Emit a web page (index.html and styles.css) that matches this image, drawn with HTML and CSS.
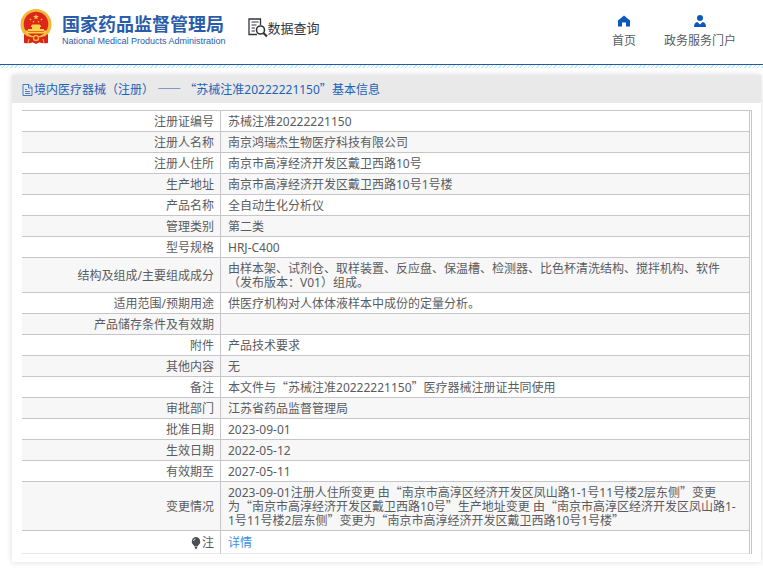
FILE: index.html
```
<!DOCTYPE html>
<html lang="zh-CN">
<head>
    <meta charset="UTF-8">
    <meta name="viewport" content="width=device-width, initial-scale=1.0">
    <title>国家药品监督管理局 数据查询</title>
    <link rel="stylesheet" href="styles.css">
</head>
<body>

    <header class="header">
        <a href="#" class="brand">
            <svg class="emblem" viewBox="0 0 32 35" aria-hidden="true">
                <path d="M5 24 L4 33 Q9 35 12 33 L16 35 L20 33 Q23 35 28 33 L27 24 Z" fill="#d8241c"/>
                <circle cx="16" cy="15.500" r="15.500" fill="#f0b838"/>
                <circle cx="16" cy="15" r="12.300" fill="#df2419"/>
                <path d="M16 5 L16.700 7.100 H18.900 L17.100 8.400 L17.800 10.500 L16 9.200 L14.200 10.500 L14.900 8.400 L13.100 7.100 H15.300 Z" fill="#f8d348"/>
                <g fill="#f8d348">
                    <circle cx="10.500" cy="10.500" r="0.800"/>
                    <circle cx="21.500" cy="10.500" r="0.800"/>
                    <circle cx="13.500" cy="12.800" r="0.800"/>
                    <circle cx="18.500" cy="12.800" r="0.800"/>
                    <path d="M11 17 L12.500 15.500 H19.500 L21 17 V18 H20 V20 H24 V21.500 H27 L25 24.500 H7 L5 21.500 H8 V20 H12 V18 H11 Z"/>
                </g>
                <path d="M8 22.500 H24" stroke="#df2419" stroke-width="0.600"/>
                <path d="M4 25 Q8 29 13 28 L16 26.500 L19 28 Q24 29 28 25 L28 34 Q22 35 19 33 L16 34 L13 33 Q10 35 4 34 Z" fill="#d8241c"/>
                <path d="M9 30 L8 34 M23 30 L24 34" fill="none" stroke="#f0b838" stroke-width="1"/>
                <circle cx="16" cy="29" r="2.500" fill="#d8241c" stroke="#f0b838" stroke-width="1.500"/>
            </svg>
            <span class="brand-text">
                <strong class="brand-name">国家药品监督管理局</strong>
                <span class="brand-en">National Medical Products Administration</span>
            </span>
        </a>

        <a href="#" class="search-link">
            <svg class="search-icon" viewBox="0 0 20 20" fill="none" stroke="#33343c" aria-hidden="true">
                <path d="M12.500 7 V1 H1 V16.500 H9" stroke-width="1.300"/>
                <path d="M3.500 4 H10.500 M3.500 7 H8.500 M3.500 10 H7 M3.500 13 H7" stroke-width="1"/>
                <circle cx="12.500" cy="12" r="4" stroke-width="1.600"/>
                <path d="M15.500 15 L19 18.500" stroke-width="2.200"/>
            </svg>
            <span>数据查询</span>
        </a>

        <nav class="nav">
            <a href="#">
                <svg class="nav-icon" viewBox="0 0 12 12" aria-hidden="true">
                    <path d="M6 0.500 L12 5.500 V11.500 H8 V7.500 H4 V11.500 H0 V5.500 Z" fill="#0b59bd"/>
                </svg>
                <span>首页</span>
            </a>
            <a href="#">
                <svg class="nav-icon" viewBox="0 0 12 12" aria-hidden="true">
                    <circle cx="6" cy="3" r="3" fill="#0b59bd"/>
                    <path d="M0 12 Q0 7.500 3.500 7 L6 9.500 L8.500 7 Q12 7.500 12 12 Z" fill="#0b59bd"/>
                </svg>
                <span>政务服务门户</span>
            </a>
        </nav>
    </header>

    <main class="card">
        <h1 class="card-title">
            <svg class="doc-icon" viewBox="0 0 11 12" fill="none" stroke="#1c62b9" aria-hidden="true">
                <path d="M1 0.500 H7 L10 3.500 V11.500 H1 Z M6.500 0.500 V4 H10 M3 5.500 H5 M3 7.500 H8 M3 9.500 H8" stroke-width="0.800"/>
            </svg>
            <span>境内医疗器械<span class="cn">（</span>注册<span class="cn">）</span> <span class="cn">——</span> <span class="cn">“</span>苏械注准20222221150<span class="cn">”</span>基本信息</span>
        </h1>

        <div class="card-body">
            <table class="info">
                <tbody>
                    <tr><th scope="row">注册证编号</th><td>苏械注准20222221150</td></tr>
                    <tr><th scope="row">注册人名称</th><td>南京鸿瑞杰生物医疗科技有限公司</td></tr>
                    <tr><th scope="row">注册人住所</th><td>南京市高淳经济开发区戴卫西路10号</td></tr>
                    <tr><th scope="row">生产地址</th><td>南京市高淳经济开发区戴卫西路10号1号楼</td></tr>
                    <tr><th scope="row">产品名称</th><td>全自动生化分析仪</td></tr>
                    <tr><th scope="row">管理类别</th><td>第二类</td></tr>
                    <tr><th scope="row">型号规格</th><td>HRJ-C400</td></tr>
                    <tr><th scope="row">结构及组成/主要组成成分</th><td>由样本架、试剂仓、取样装置、反应盘、保温槽、检测器、比色杯清洗结构、搅拌机构、软件（发布版本：V01）组成。</td></tr>
                    <tr><th scope="row">适用范围/预期用途</th><td>供医疗机构对人体体液样本中成份的定量分析。</td></tr>
                    <tr><th scope="row">产品储存条件及有效期</th><td></td></tr>
                    <tr><th scope="row">附件</th><td>产品技术要求</td></tr>
                    <tr><th scope="row">其他内容</th><td>无</td></tr>
                    <tr><th scope="row">备注</th><td>本文件与<span class="cn">“</span>苏械注准20222221150<span class="cn">”</span>医疗器械注册证共同使用</td></tr>
                    <tr><th scope="row">审批部门</th><td>江苏省药品监督管理局</td></tr>
                    <tr><th scope="row">批准日期</th><td>2023-09-01</td></tr>
                    <tr><th scope="row">生效日期</th><td>2022-05-12</td></tr>
                    <tr><th scope="row">有效期至</th><td>2027-05-11</td></tr>
                    <tr><th scope="row">变更情况</th><td>2023-09-01注册人住所变更 由<span class="cn">“</span>南京市高淳区经济开发区凤山路1-1号11号楼2层东侧<span class="cn">”</span>变更<span class="keep">为<span class="cn">“</span>南京市</span>高淳经济开发区戴卫西路10号<span class="cn">”</span>生产地址变更 由<span class="cn">“</span>南京市高淳区经济开发区凤山路1-<wbr><span class="keep">1号</span>11号楼2层东侧<span class="cn">”</span>变更为<span class="cn">“</span>南京市高淳经济开发区戴卫西路10号1号楼<span class="cn">”</span></td></tr>
                    <tr class="note">
                        <th scope="row">
                            <svg class="bulb-icon" viewBox="0 0 10 12" aria-hidden="true">
                                <path d="M5 0 A4.500 4.500 0 0 1 7.500 8 L6.500 9.500 H3.500 L2.500 8 A4.500 4.500 0 0 1 5 0 Z M3.500 10 H6.500 L5.500 12 H4.500 Z" fill="#4c4e55"/>
                                <path d="M2.500 4 Q2.800 2.200 4.500 2" fill="none" stroke="#ffffff" stroke-width="0.800"/>
                            </svg>注</th>
                        <td><a href="#">详情</a></td>
                    </tr>
                </tbody>
            </table>
        </div>
    </main>

</body>
</html>
```
FILE: styles.css
```
/* General page styling */
* {
    box-sizing: border-box;
}

body {
    margin: 0;
    background: #ffffff;
    color: #5a5b60;
    font-family: "Noto Sans", "Noto Sans CJK SC", sans-serif;
    font-size: 12px;
    line-height: 14px;
}

a {
    color: inherit;
    text-decoration: none;
}

/* Full-width Chinese punctuation */
.cn {
    font-family: "Noto Sans CJK SC", sans-serif;
    line-height: 10px;
}

.keep {
    white-space: nowrap;
}

/* Header */
.header {
    display: flex;
    align-items: flex-start;
    height: 65px;
    padding: 9px 27px 0 20px;
    border-bottom: 1px solid #1a5c9f;
}

/* Hatched strip under the header */
.header + .card::before {
    content: "";
    position: absolute;
    top: 65px;
    left: 0;
    right: 0;
    height: 3px;
    background: repeating-linear-gradient(135deg, #c3e6f5 0 1px, #ffffff 1px 3px);
}

.brand {
    display: flex;
    gap: 10px;
    color: #2a5caa;
}

.emblem {
    width: 32px;
    height: 35px;
}

.brand-text {
    display: flex;
    flex-direction: column;
    padding-top: 4px;
}

.brand-name {
    font-family: "Noto Sans CJK SC", sans-serif;
    font-size: 18px;
    line-height: 20px;
}

.brand-en {
    font-family: "Liberation Sans", Arial, sans-serif;
    font-size: 9px;
    line-height: 16px;
}

.search-link {
    display: flex;
    align-items: center;
    margin: 9px 0 0 22px;
    color: #33343c;
    font-size: 13px;
    line-height: 20px;
}

.search-icon {
    width: 20px;
    height: 20px;
}

.nav {
    display: flex;
    gap: 28px;
    margin-left: auto;
    padding-top: 6px;
}

.nav a {
    display: flex;
    flex-direction: column;
    align-items: center;
    gap: 7px;
}

.nav-icon {
    width: 12px;
    height: 12px;
}

/* Card */
.card {
    margin: 10px 2px 8px 12px;
    background: #ffffff;
    box-shadow: 0 0 6px rgba(0, 0, 0, 0.15);
}

.card-title {
    display: flex;
    align-items: center;
    gap: 1px;
    margin: 0;
    padding: 8px 10px 6px;
    background: #e9e9e9;
    color: #1c62b9;
    font-size: 12px;
    font-weight: normal;
}

.doc-icon {
    width: 11px;
    height: 12px;
}

.card-body {
    padding: 7px 9px 8px 10px;
}

/* Info table */
.info {
    width: 100%;
    border-collapse: separate;
    border-spacing: 0;
    border-top: 1px solid #c6c6ca;
    border-right: 1px solid #c6c6ca;
    padding-right: 1px;
}

.info th,
.info td {
    padding: 4px 6px 2px;
    border-right: 1px solid #c6c6ca;
    border-bottom: 1px solid #c6c6ca;
    height: 21px;
}

.info th {
    width: 199px;
    font-weight: normal;
    text-align: right;
}

.info td {
    padding-right: 12px;
    padding-left: 7px;
    text-align: left;
}

.info tr:nth-child(even) {
    background: #f7f7f7;
}

.info .note th,
.info .note td {
    padding-top: 5px;
    padding-bottom: 3px;
    border-bottom-color: #e8e8e8;
}

.note a {
    color: #3a8ee6;
}

.bulb-icon {
    width: 10px;
    height: 12px;
    margin-right: 1px;
    vertical-align: -2px;
}
```
